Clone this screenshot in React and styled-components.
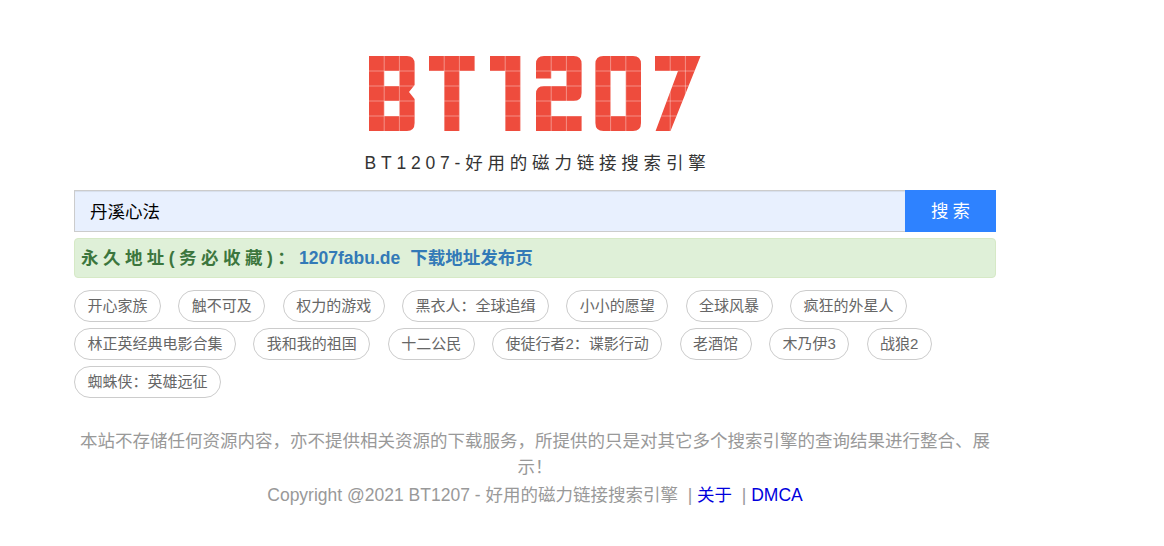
import React from "react";
import styled, { createGlobalStyle } from "styled-components";

const Global = createGlobalStyle`
  * { box-sizing: border-box; }
  html, body { margin: 0; padding: 0; background: #fff; }
  body { font-family: "Liberation Sans", "Noto Sans CJK SC", sans-serif; font-size: 14px; color: #333; }
`;

const Page = styled.main`
  width: 922px;
  margin-left: 74px;
  padding-top: 56px;
`;

const Brand = styled.header`
  display: flex;
  flex-direction: column;
  align-items: center;
`;

const LogoSvg = styled.svg`
  display: block;
  width: 332px;
  height: 77px;
`;

const Tagline = styled.h1`
  margin: 17px 0 0;
  padding-left: 5px;
  font-size: 17.5px;
  line-height: 26px;
  font-weight: 400;
  letter-spacing: 4.8px;
  color: #333;
`;

const SearchForm = styled.form`
  display: flex;
  height: 42px;
  margin-top: 14px;
`;

const SearchInput = styled.input`
  flex: 1;
  min-width: 0;
  height: 42px;
  padding: 0 15px 2px;
  border: 1px solid #ccc;
  border-right: 0;
  border-radius: 0;
  background: #e8f0fe;
  box-shadow: inset 0 1px 1px rgba(0, 0, 0, 0.075);
  font: 17.5px "Liberation Sans", "Noto Sans CJK SC", sans-serif;
  color: #000;
  outline: none;
`;

const SearchButton = styled.button`
  width: 91px;
  height: 42px;
  padding: 0 0 4px 4px;
  border: 0;
  background: #2e82ff;
  color: #fff;
  font: 17.5px "Liberation Sans", "Noto Sans CJK SC", sans-serif;
  letter-spacing: 4px;
`;

const Notice = styled.div`
  height: 40px;
  margin-top: 6px;
  padding: 0 6px;
  border: 1px solid #d6e9c6;
  border-radius: 4px;
  background: #dff0d8;
  font-size: 17.5px;
  line-height: 38px;
  font-weight: 700;
`;

const NoticeLabel = styled.span`
  color: #3c763d;
  letter-spacing: 4.45px;
`;

const NoticeLink = styled.a`
  color: #337ab7;
  text-decoration: none;
  margin-right: 10px;
`;

const Chips = styled.nav`
  display: flex;
  flex-wrap: wrap;
  gap: 6px 17.3px;
  margin-top: 12px;
`;

const Chip = styled.a`
  display: block;
  height: 32px;
  padding: 0 12.5px;
  border: 1px solid #ccc;
  border-radius: 16px;
  font-size: 15px;
  line-height: 30px;
  color: #666;
  text-decoration: none;
`;

const Footer = styled.footer`
  margin-top: 30px;
  text-align: center;
  font-size: 17.5px;
  color: #999;
`;

const Disclaimer = styled.p`
  margin: 0;
  line-height: 26px;
`;

const Copyright = styled.p`
  margin: 0;
  line-height: 30px;
`;

const FooterLink = styled.a`
  color: #00d;
  text-decoration: none;
`;

const U = 15.2;
const R = 15;
const W = 3 * U;
const H = 5 * R;

function Grid({ x }) {
  const v = [1, 2].map((i) => x + i * U);
  const h = [1, 2, 3, 4].map((i) => i * R);
  return (
    <g stroke="#ffffff" strokeOpacity="0.38" strokeWidth="1">
      {v.map((p) => <line key={p} x1={p} x2={p} y1={0} y2={H} />)}
      {h.map((p) => <line key={p} x1={x} x2={x + W} y1={p} y2={p} />)}
    </g>
  );
}

const letters = [
  { x: 0, d: `M0 0H38Q45.6 0 45.6 8V29L40 36L45.6 43V67Q45.6 75 38 75H0ZM15.2 15V30H30.4V15ZM15.2 45V60H30.4V45Z` },
  { x: 60, d: `M60 0H105.6V15H90.4V75H75.2V15H60Z` },
  { x: 121, d: `M121 0H151.4V75H136.2V15H121Z` },
  { x: 167, d: `M175 0H204.6Q212.6 0 212.6 8V37Q212.6 45 204.6 45H182.2V60H212.6V75H167V38Q167 30 175 30H197.4V15H182.2V22.5H167V8Q167 0 175 0Z` },
  { x: 226.4, d: `M234.4 0H264Q272 0 272 8V67Q272 75 264 75H234.4Q226.4 75 226.4 67V8Q226.4 0 234.4 0ZM241.6 15V60H256.8V15Z` },
  { x: 286, d: `M286 0H331.6L301.5 75H286.6L309 15H286Z` },
];

const Logo = () => (
  <LogoSvg viewBox="0 0 332 77" role="img" aria-label="BT1207">
    <defs>
      {letters.map((l, i) => (
        <clipPath id={`clip${i}`} key={l.x}>
          <path d={l.d} clipRule="evenodd" />
        </clipPath>
      ))}
    </defs>
    {letters.map((l, i) => (
      <g key={l.x}>
        <path d={l.d} fill="#ee4c3d" fillRule="evenodd" />
        <g clipPath={`url(#clip${i})`}>
          <Grid x={l.x} />
        </g>
      </g>
    ))}
  </LogoSvg>
);

const tags = [
  "开心家族", "触不可及", "权力的游戏", "黑衣人：全球追缉", "小小的愿望", "全球风暴", "疯狂的外星人",
  "林正英经典电影合集", "我和我的祖国", "十二公民", "使徒行者2：谍影行动", "老酒馆", "木乃伊3", "战狼2",
  "蜘蛛侠：英雄远征",
];

export default function App() {
  return (
    <Page>
      <Global />
      <Brand>
        <Logo />
        <Tagline>BT1207-好用的磁力链接搜索引擎</Tagline>
      </Brand>
      <SearchForm onSubmit={(e) => e.preventDefault()}>
        <SearchInput defaultValue="丹溪心法" />
        <SearchButton type="submit">搜索</SearchButton>
      </SearchForm>
      <Notice>
        <NoticeLabel>永久地址(务必收藏)：</NoticeLabel>
        <NoticeLink href="#">1207fabu.de</NoticeLink>
        <NoticeLink href="#">下载地址发布页</NoticeLink>
      </Notice>
      <Chips>
        {tags.map((t) => <Chip href="#" key={t}>{t}</Chip>)}
      </Chips>
      <Footer>
        <Disclaimer>本站不存储任何资源内容，亦不提供相关资源的下载服务，所提供的只是对其它多个搜索引擎的查询结果进行整合、展示！</Disclaimer>
        <Copyright>
          Copyright @2021 BT1207 - 好用的磁力链接搜索引擎 &nbsp;| <FooterLink href="#">关于</FooterLink> &nbsp;| <FooterLink href="#">DMCA</FooterLink>
        </Copyright>
      </Footer>
    </Page>
  );
}
